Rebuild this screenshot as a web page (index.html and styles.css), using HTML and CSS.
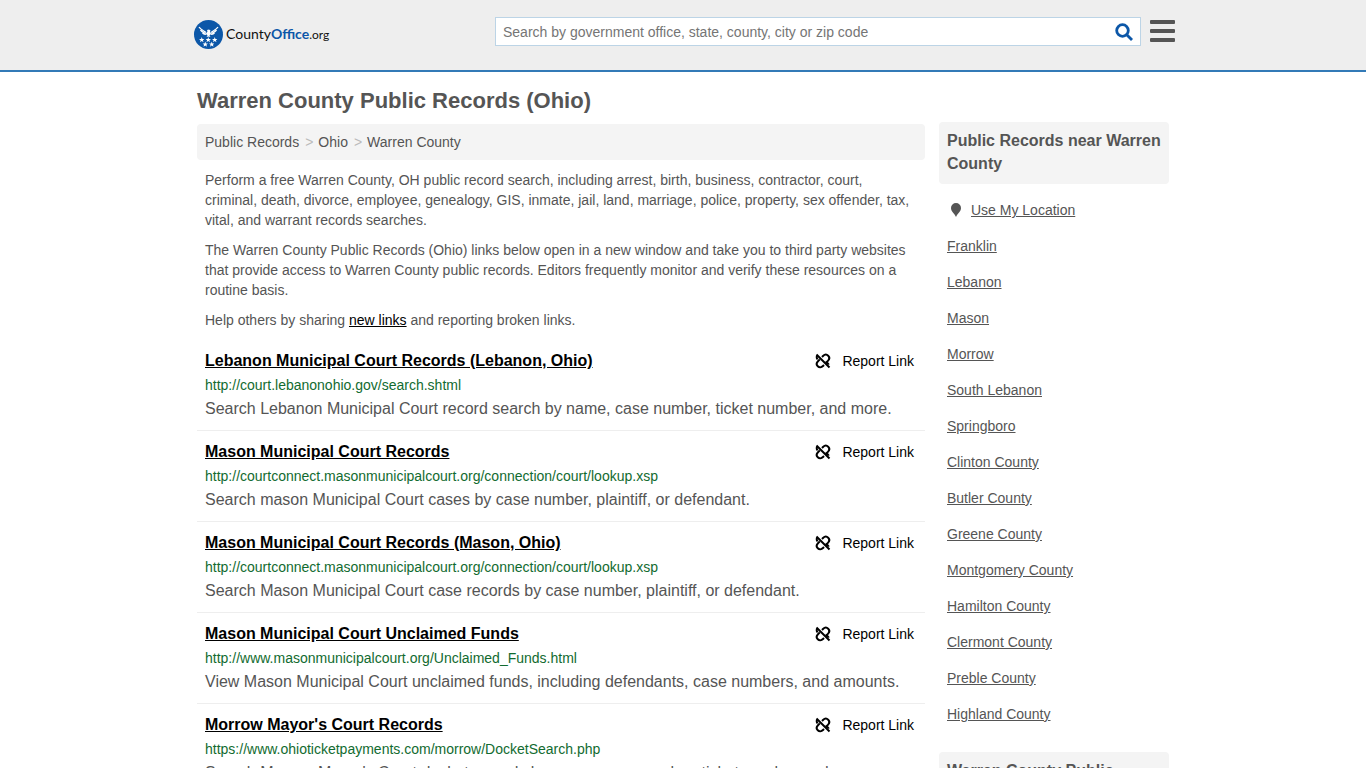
FILE: index.html
```html
<!DOCTYPE html>
<html lang="en">
<head>
  <meta charset="UTF-8">
  <meta name="viewport" content="width=device-width, initial-scale=1.0">
  <title>Warren County Public Records (Ohio)</title>
  <link rel="stylesheet" href="styles.css">
</head>
<body>
  <!-- shared icons -->
  <svg class="sprite" aria-hidden="true">
    <symbol id="icon-unlink" viewBox="0 0 16 16">
      <g fill="none" stroke="currentColor" stroke-width="2">
        <path d="M1.500 1.500l13 13"/>
        <path d="M7 4l1-1c1.600-1.600 3.800-1.700 5.200-.3s1.300 3.600-.3 5.200L11 9.800"/>
        <path d="M4.800 6.400L3 8.200c-1.600 1.600-1.600 3.700-.2 5.100s3.600 1.300 5.200-.3l1-1"/>
        <path d="M2.200 2.500c-.7 1.300-.6 2.700.4 3.900M10.500 9.600c1.500.1 2.700.7 3.300 2"/>
      </g>
    </symbol>
    <symbol id="star" viewBox="0 0 10 10">
      <path fill="#fff" d="M5 0l1.300 3.500H10L7.100 5.800 8.200 9.500 5 7.300 1.800 9.500 2.900 5.800 0 3.500h3.700z"/>
    </symbol>
  </svg>

  <header class="header">
    <div class="container header-inner">
      <a href="#" class="logo">
        <svg class="logo-mark" viewBox="0 0 58 58" aria-hidden="true">
          <circle cx="29" cy="29" r="29" fill="#0c57a8"/>
          <g fill="none" stroke="#fff" stroke-width="2.600">
            <path d="M10 14c4 6 9 7 14 11M48 14c-4 6-9 7-14 11"/>
            <path d="M13 20c3 4 6 5 10 7M45 20c-3 4-6 5-10 7"/>
            <path d="M17 26c2 2 5 3 8 2M41 26c-2 2-5 3-8 2"/>
          </g>
          <path fill="#fff" d="M26 20l4-1 3 2-1 2 2 4-3 4 2 3-4-1-4 1 2-3-3-4 3-4z"/>
          <use href="#star" x="10" y="34" width="11" height="11"/>
          <use href="#star" x="23" y="34" width="11" height="11"/>
          <use href="#star" x="36" y="34" width="11" height="11"/>
          <use href="#star" x="17" y="43" width="11" height="11"/>
          <use href="#star" x="30" y="43" width="11" height="11"/>
        </svg>
        <span class="logo-text">County<b>Office</b><small>.org</small></span>
      </a>
      <form class="search">
        <input type="text" class="search-input" aria-label="Search" placeholder="Search by government office, state, county, city or zip code">
        <button type="button" class="search-btn" aria-label="Search">
          <svg viewBox="0 0 18 18" width="18" height="18"><g fill="none" stroke="#0c57a8" stroke-width="2.800"><circle cx="7.500" cy="7.500" r="5.800"/><path d="M11.500 11.500l5.500 5.500"/></g></svg>
        </button>
      </form>
      <button type="button" class="menu-btn" aria-label="Menu"><span></span><span></span><span></span></button>
    </div>
  </header>

  <div class="container page">
    <main class="main">
      <h1>Warren County Public Records (Ohio)</h1>
      <nav class="breadcrumb" aria-label="Breadcrumb">
        <a href="#">Public Records</a><span>&gt;</span><a href="#">Ohio</a><span>&gt;</span><a href="#">Warren County</a>
      </nav>

      <div class="intro">
        <p>Perform a free Warren County, OH public record search, including arrest, birth, business, contractor, court, criminal, death, divorce, employee, genealogy, GIS, inmate, jail, land, marriage, police, property, sex offender, tax, vital, and warrant records searches.</p>
        <p>The Warren County Public Records (Ohio) links below open in a new window and take you to third party websites that provide access to Warren County public records. Editors frequently monitor and verify these resources on a routine basis.</p>
        <p>Help others by sharing <a href="#">new links</a> and reporting broken links.</p>
      </div>

      <article class="record">
        <div class="record-top">
          <h2><a href="#">Lebanon Municipal Court Records (Lebanon, Ohio)</a></h2>
          <a href="#" class="report"><svg><use href="#icon-unlink"/></svg>Report Link</a>
        </div>
        <div class="url">http://court.lebanonohio.gov/search.shtml</div>
        <p>Search Lebanon Municipal Court record search by name, case number, ticket number, and more.</p>
      </article>

      <article class="record">
        <div class="record-top">
          <h2><a href="#">Mason Municipal Court Records</a></h2>
          <a href="#" class="report"><svg><use href="#icon-unlink"/></svg>Report Link</a>
        </div>
        <div class="url">http://courtconnect.masonmunicipalcourt.org/connection/court/lookup.xsp</div>
        <p>Search mason Municipal Court cases by case number, plaintiff, or defendant.</p>
      </article>

      <article class="record">
        <div class="record-top">
          <h2><a href="#">Mason Municipal Court Records (Mason, Ohio)</a></h2>
          <a href="#" class="report"><svg><use href="#icon-unlink"/></svg>Report Link</a>
        </div>
        <div class="url">http://courtconnect.masonmunicipalcourt.org/connection/court/lookup.xsp</div>
        <p>Search Mason Municipal Court case records by case number, plaintiff, or defendant.</p>
      </article>

      <article class="record">
        <div class="record-top">
          <h2><a href="#">Mason Municipal Court Unclaimed Funds</a></h2>
          <a href="#" class="report"><svg><use href="#icon-unlink"/></svg>Report Link</a>
        </div>
        <div class="url">http://www.masonmunicipalcourt.org/Unclaimed_Funds.html</div>
        <p>View Mason Municipal Court unclaimed funds, including defendants, case numbers, and amounts.</p>
      </article>

      <article class="record">
        <div class="record-top">
          <h2><a href="#">Morrow Mayor's Court Records</a></h2>
          <a href="#" class="report"><svg><use href="#icon-unlink"/></svg>Report Link</a>
        </div>
        <div class="url">https://www.ohioticketpayments.com/morrow/DocketSearch.php</div>
        <p>Search Morrow Mayor's Court docket records by name, case number, ticket number and more.</p>
      </article>
    </main>

    <aside class="sidebar">
      <h3>Public Records near Warren County</h3>
      <ul>
        <li><svg class="pin" viewBox="0 0 10 14" aria-hidden="true"><path fill="currentColor" d="M5 0a5 5 0 0 0-5 5c0 3.500 3.500 5.500 5 9 1.500-3.500 5-5.500 5-9a5 5 0 0 0-5-5z"/></svg><a href="#">Use My Location</a></li>
        <li><a href="#">Franklin</a></li>
        <li><a href="#">Lebanon</a></li>
        <li><a href="#">Mason</a></li>
        <li><a href="#">Morrow</a></li>
        <li><a href="#">South Lebanon</a></li>
        <li><a href="#">Springboro</a></li>
        <li><a href="#">Clinton County</a></li>
        <li><a href="#">Butler County</a></li>
        <li><a href="#">Greene County</a></li>
        <li><a href="#">Montgomery County</a></li>
        <li><a href="#">Hamilton County</a></li>
        <li><a href="#">Clermont County</a></li>
        <li><a href="#">Preble County</a></li>
        <li><a href="#">Highland County</a></li>
      </ul>
      <h3>Warren County Public Records</h3>
    </aside>
  </div>
</body>
</html>
```
FILE: styles.css
```css
* {
  box-sizing: border-box;
}
body {
  margin: 0;
  height: 100vh;
  overflow: hidden;
  font-family: Arial, "Liberation Sans", sans-serif;
  font-size: 14px;
  line-height: 20px;
  color: #555;
  background: #fff;
}
a {
  color: inherit;
}
button {
  padding: 0;
  border: 0;
  background: none;
  cursor: pointer;
}
.sprite {
  display: none;
}
.container {
  max-width: 972px;
  margin: 0 auto;
}

/* header */
.header {
  background: #eee;
  border-bottom: 2px solid #337ab7;
}
.header-inner {
  display: flex;
  align-items: flex-start;
  max-width: 984px;
  height: 70px;
  padding: 17px 0 0 3px;
}
.logo {
  display: flex;
  align-items: center;
  gap: 3px;
  margin-top: 3px;
  color: #111;
  text-decoration: none;
}
.logo-mark {
  width: 29px;
  height: 29px;
}
.logo-text {
  font-family: Lato, sans-serif;
  font-size: 14px;
}
.logo-text b {
  color: #0c57a8;
}
.logo-text small {
  font-size: 12px;
}
.search {
  display: flex;
  width: 646px;
  height: 29px;
  margin-left: auto;
  background: #fff;
  border: 1px solid #bcd4e6;
}
.search-input {
  flex: 1;
  padding: 0 7px;
  border: 0;
  background: none;
  font: inherit;
}
.search-input::placeholder {
  color: #757575;
}
.search-btn {
  display: flex;
  align-items: center;
  padding-right: 7px;
}
.menu-btn {
  display: flex;
  flex-direction: column;
  gap: 5px;
  width: 25px;
  margin: 3px 0 0 9px;
}
.menu-btn span {
  width: 100%;
  height: 4px;
  border-radius: 1px;
  background: #555;
}

/* content */
.page {
  display: flex;
  gap: 14px;
}
.main {
  flex: 1;
}
h1 {
  margin: 17px 0 11px;
  font-size: 22px;
  line-height: 24px;
}
.breadcrumb {
  padding: 8px;
  border-radius: 4px;
  background: #f4f4f4;
}
.breadcrumb a {
  text-decoration: none;
}
.breadcrumb span {
  padding: 0 5px 0 6px;
  color: #bbb;
}
.intro {
  padding: 10px 8px 0;
}
.intro p {
  margin: 0 0 10px;
}
.intro a {
  color: #000;
}
.record {
  padding: 9px 8px 10px;
  border-bottom: 1px solid #eee;
}
.record-top {
  display: flex;
  justify-content: space-between;
}
.record h2 {
  margin: 0;
  font-size: 16px;
  line-height: 24px;
  color: #000;
}
.report {
  display: flex;
  align-items: center;
  gap: 11px;
  margin-right: 3px;
  color: #000;
  text-decoration: none;
}
.report svg {
  width: 16px;
  height: 16px;
}
.url {
  line-height: 24px;
  color: #126b30;
}
.record p {
  margin: 0;
  font-size: 16px;
  line-height: 23px;
}

/* sidebar */
.sidebar {
  width: 230px;
  padding-top: 50px;
}
.sidebar h3 {
  margin: 0;
  padding: 7px 8px 9px;
  border-radius: 4px;
  background: #f4f4f4;
  font-size: 16px;
  line-height: 23px;
}
.sidebar ul {
  margin: 8px 0 20px;
  padding: 0 8px;
  list-style: none;
}
.sidebar li {
  display: flex;
  align-items: center;
  height: 36px;
}
.pin {
  width: 10px;
  height: 14px;
  margin: 0 10px 0 4px;
}
```
